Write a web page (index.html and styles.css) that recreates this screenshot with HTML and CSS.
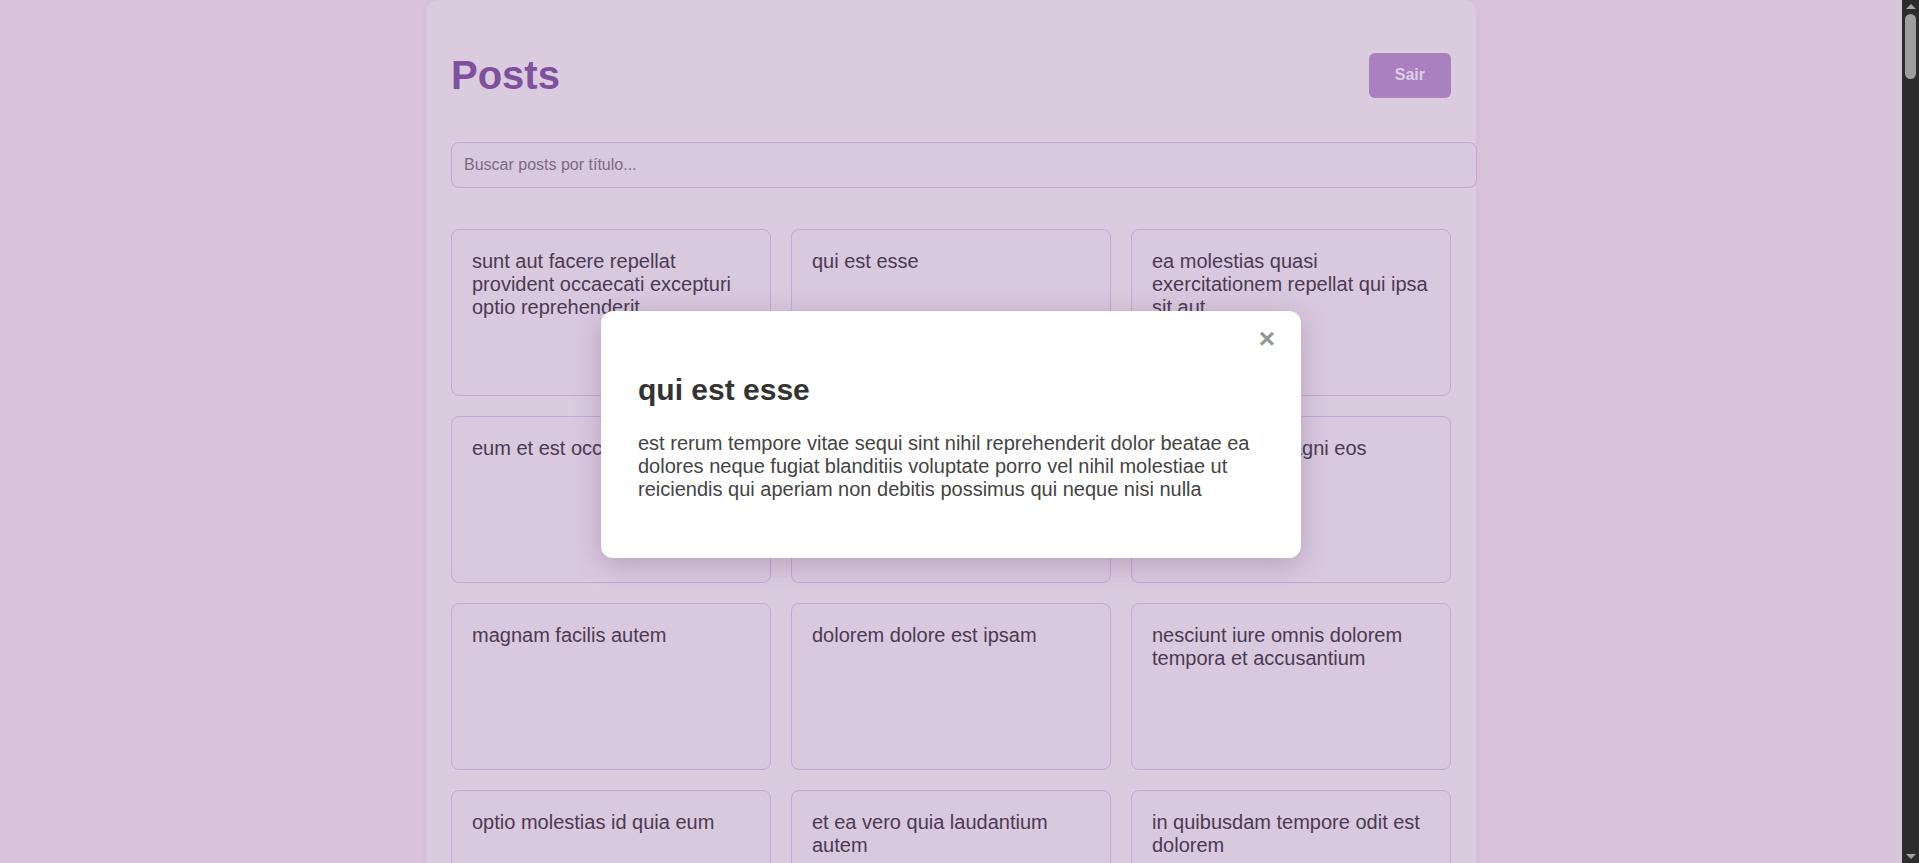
FILE: index.html
```html
<!DOCTYPE html>
<html lang="pt-BR">
<head>
<meta charset="utf-8">
<title>Posts</title>
<link rel="stylesheet" href="styles.css">
</head>
<body>
<div class="window">
  <div class="viewport">
    <main class="container">
      <header class="header">
        <h1 class="title">Posts</h1>
        <button class="logout" type="button">Sair</button>
      </header>
      <input class="search" type="text" placeholder="Buscar posts por título...">
      <section class="grid">
        <article class="card"><h3 class="card-title">sunt aut facere repellat provident occaecati excepturi optio reprehenderit</h3></article>
        <article class="card"><h3 class="card-title">qui est esse</h3></article>
        <article class="card"><h3 class="card-title">ea molestias quasi exercitationem repellat qui ipsa sit aut</h3></article>
        <article class="card"><h3 class="card-title">eum et est occaecati</h3></article>
        <article class="card"><h3 class="card-title">nesciunt quas odio</h3></article>
        <article class="card"><h3 class="card-title">dolorem eum magni eos aperiam quia</h3></article>
        <article class="card"><h3 class="card-title">magnam facilis autem</h3></article>
        <article class="card"><h3 class="card-title">dolorem dolore est ipsam</h3></article>
        <article class="card"><h3 class="card-title">nesciunt iure omnis dolorem tempora et accusantium</h3></article>
        <article class="card"><h3 class="card-title">optio molestias id quia eum</h3></article>
        <article class="card"><h3 class="card-title">et ea vero quia laudantium autem</h3></article>
        <article class="card"><h3 class="card-title">in quibusdam tempore odit est dolorem</h3></article>
        <article class="card"><h3 class="card-title">dolorum ut in voluptas mollitia et saepe quo animi</h3></article>
        <article class="card"><h3 class="card-title">voluptatem eligendi optio</h3></article>
        <article class="card"><h3 class="card-title">eveniet quod temporibus</h3></article>
      </section>
    </main>
    <div class="overlay">
      <div class="modal">
        <button class="close" type="button">×</button>
        <h2 class="modal-title">qui est esse</h2>
        <p class="modal-body">est rerum tempore vitae sequi sint nihil reprehenderit dolor beatae ea dolores neque fugiat blanditiis voluptate porro vel nihil molestiae ut reiciendis qui aperiam non debitis possimus qui neque nisi nulla</p>
      </div>
    </div>
  </div>
  <div class="scrollbar">
    <span class="arrow-up"></span>
    <span class="thumb"></span>
    <span class="track"></span>
    <span class="arrow-down"></span>
  </div>
</div>
</body>
</html>
```

FILE: styles.css
```css
html, body {
  margin: 0;
  padding: 0;
  height: 100%;
}

body {
  font-family: "Liberation Sans", Arial, sans-serif;
  background: #d8c5dc;
  overflow: hidden;
}

.window {
  display: flex;
  height: 100vh;
}

.viewport {
  flex: 1;
  position: relative;
  overflow: hidden;
  background: #d8c5dc;
}

.container {
  width: 1000px;
  margin: 0 auto;
  padding: 25px 25px 25px;
  background: #dacbdf;
  border-radius: 12px;
  box-shadow: 0 0 6px rgba(150, 110, 160, 0.12);
}

.header {
  display: flex;
  justify-content: space-between;
  align-items: center;
  margin-bottom: 17px;
}

.title {
  margin: 27px 0;
  font-size: 40px;
  line-height: 46px;
  font-weight: bold;
  color: #7e509e;
}

.logout {
  height: 45px;
  padding: 0 26px;
  border: none;
  border-radius: 6px;
  background: #aa80bf;
  color: #dccfe3;
  font-family: "Liberation Sans", Arial, sans-serif;
  font-size: 16px;
  font-weight: bold;
}

.search {
  display: block;
  width: 100%;
  padding: 13px 12px;
  font-family: "Liberation Sans", Arial, sans-serif;
  font-size: 16px;
  line-height: 18px;
  border: 1px solid #c5a6d6;
  border-radius: 8px;
  background: #d9c9df;
  color: #4b3a52;
  outline: none;
}

.search::placeholder {
  color: #7b6b82;
}

.grid {
  margin-top: 41px;
  display: grid;
  grid-template-columns: repeat(3, 1fr);
  gap: 20px;
}

.card {
  box-sizing: border-box;
  height: 167px;
  padding: 20px;
  border: 1px solid #c6a7d6;
  border-radius: 8px;
  background: #d9c9df;
}

.card-title {
  margin: 0;
  font-size: 20px;
  font-weight: normal;
  line-height: 23px;
  color: #4b3a52;
}

.overlay {
  position: absolute;
  inset: 0;
  box-sizing: border-box;
  padding-top: 6px;
  display: flex;
  align-items: center;
  justify-content: center;
}

.modal {
  position: relative;
  box-sizing: border-box;
  width: 700px;
  padding: 37px;
  background: #ffffff;
  border-radius: 12px;
  box-shadow: 0 6px 28px rgba(90, 50, 100, 0.28);
}

.close {
  position: absolute;
  top: 14px;
  right: 26px;
  padding: 0;
  border: none;
  background: none;
  font-family: "Liberation Sans", Arial, sans-serif;
  font-size: 28px;
  font-weight: bold;
  line-height: 28px;
  color: #959595;
}

.modal-title {
  margin: 25px 0;
  font-size: 30px;
  font-weight: bold;
  color: #333333;
}

.modal-body {
  margin: 20px 0;
  font-size: 20px;
  line-height: 23px;
  color: #444444;
}

.scrollbar {
  width: 17px;
  flex: none;
  background: #2c2c2c;
  display: flex;
  flex-direction: column;
  align-items: center;
  padding: 4px 0;
  box-sizing: border-box;
}

.arrow-up {
  width: 0;
  height: 0;
  border-left: 5px solid transparent;
  border-right: 5px solid transparent;
  border-bottom: 5px solid #a3a3a3;
}

.thumb {
  margin-top: 5px;
  width: 11px;
  height: 65px;
  border-radius: 6px;
  background: #9f9f9f;
}

.track {
  flex: 1;
}

.arrow-down {
  width: 0;
  height: 0;
  border-left: 5px solid transparent;
  border-right: 5px solid transparent;
  border-top: 5px solid #a3a3a3;
}
```
